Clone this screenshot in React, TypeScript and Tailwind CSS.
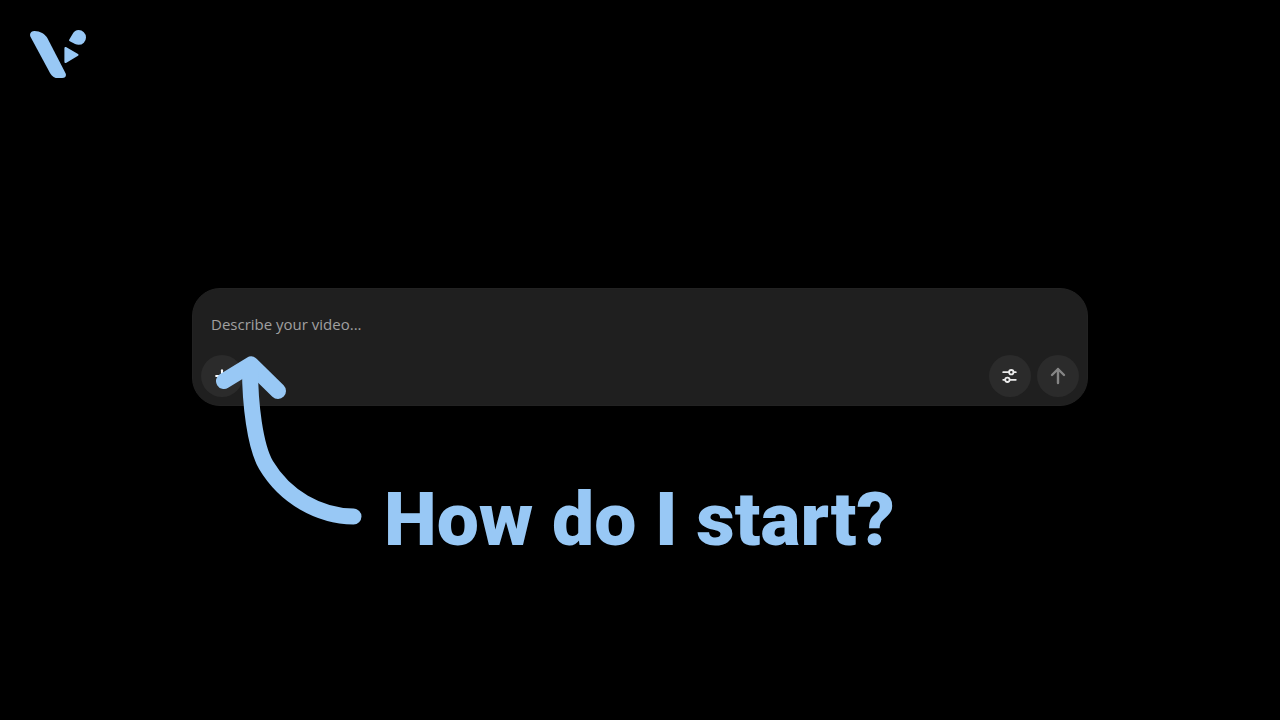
import { useState } from "react";
import { Plus } from "lucide-react";

function Logo() {
  return (
    <svg viewBox="0 0 56 48" className="h-12 w-14 fill-[#98c8f5]" aria-hidden="true">
      <path d="M0.6 7C-1 3.4 1 0.9 4.6 0.9C10 0.9 15 3.8 17.6 8.4L35.4 43C36.8 45.8 35.4 48 32.2 48H27C23.6 48 21.4 45.4 19.6 42.2Z" />
      <path d="M39.6 9L42.6 4C44 1.4 46 0 48.6 0A7.4 7.4 0 0 1 48.6 14.8C46.2 14.8 44 13.4 41.2 12C38.8 10.8 38.6 10.6 39.6 9Z" />
      <path d="M34.4 18.4C34.4 17.2 35.4 16.8 36.4 17.3L47.6 23.7C48.9 24.4 48.9 25.4 47.6 26.1L36.4 32.8C35.4 33.4 34.4 33 34.4 31.8Z" />
    </svg>
  );
}

function SettingsIcon() {
  return (
    <svg viewBox="0 0 16 16" className="h-4 w-4 fill-none stroke-[#ececec] stroke-[1.8]" aria-hidden="true">
      <path d="M1.2 4.2H7M11.6 4.2H13.8M1.2 11.8H3M8 11.8H13.8" strokeLinecap="round" />
      <circle cx="9.3" cy="4.2" r="2.2" />
      <circle cx="5.4" cy="11.8" r="2.2" />
    </svg>
  );
}

function SendIcon() {
  return (
    <svg viewBox="0 0 16 18" className="h-[18px] w-4 fill-none stroke-[#858585] stroke-[2.4]" aria-hidden="true">
      <path d="M8 16V2M2 8L8 2L14 8" strokeLinecap="round" strokeLinejoin="round" />
    </svg>
  );
}

function HintArrow() {
  return (
    <svg
      viewBox="0 0 148 170"
      className="pointer-events-none absolute left-[23px] top-[68px] h-[170px] w-[148px] fill-none stroke-[#98c8f5] stroke-16"
      strokeLinecap="round"
      strokeLinejoin="round"
      aria-hidden="true"
    >
      <path d="M9 25L36 8.5L63 35" />
      <path d="M35 12C35 48 40 90 51 109C70 141 104 160 138.5 160.5" />
    </svg>
  );
}

export default function App() {
  const [prompt, setPrompt] = useState("");

  return (
    <div className="min-h-screen bg-black font-[Roboto,sans-serif]">
      {/* Header */}
      <header className="flex p-[30px]">
        <a href="#" aria-label="Home">
          <Logo />
        </a>
      </header>

      <main className="mx-auto w-[70%] pt-[180px]">
        {/* Prompt box */}
        <div className="relative">
          <form
            onSubmit={(e) => e.preventDefault()}
            className="rounded-[28px] border border-[#222222] bg-[#1f1f1f] p-2"
          >
            <textarea
              aria-label="Video description"
              rows={1}
              value={prompt}
              onChange={(e) => setPrompt(e.target.value)}
              placeholder="Describe your video..."
              className="block h-[58px] w-full resize-none px-[10px] pt-[15px] font-['Open_Sans',sans-serif] text-[15px] leading-6 text-white outline-none placeholder:text-[#a0a0a0]"
            />
            <div className="flex items-center gap-1.5">
              <button
                type="button"
                aria-label="Add"
                className="mr-auto flex h-[42px] w-[42px] items-center justify-center rounded-full bg-[#2b2b2b] text-white"
              >
                <Plus className="h-5 w-5" strokeWidth={2.5} />
              </button>
              <button
                type="button"
                aria-label="Settings"
                className="flex h-[42px] w-[42px] items-center justify-center rounded-full bg-[#2b2b2b]"
              >
                <SettingsIcon />
              </button>
              <button
                type="submit"
                aria-label="Send"
                className="flex h-[42px] w-[42px] items-center justify-center rounded-full bg-[#2b2b2b]"
              >
                <SendIcon />
              </button>
            </div>
          </form>
          <HintArrow />
        </div>

        <h1 className="pl-48 pt-[68px] text-[75px] font-black leading-[90px] text-[#98c8f5]">
          How do I start?
        </h1>
      </main>
    </div>
  );
}
